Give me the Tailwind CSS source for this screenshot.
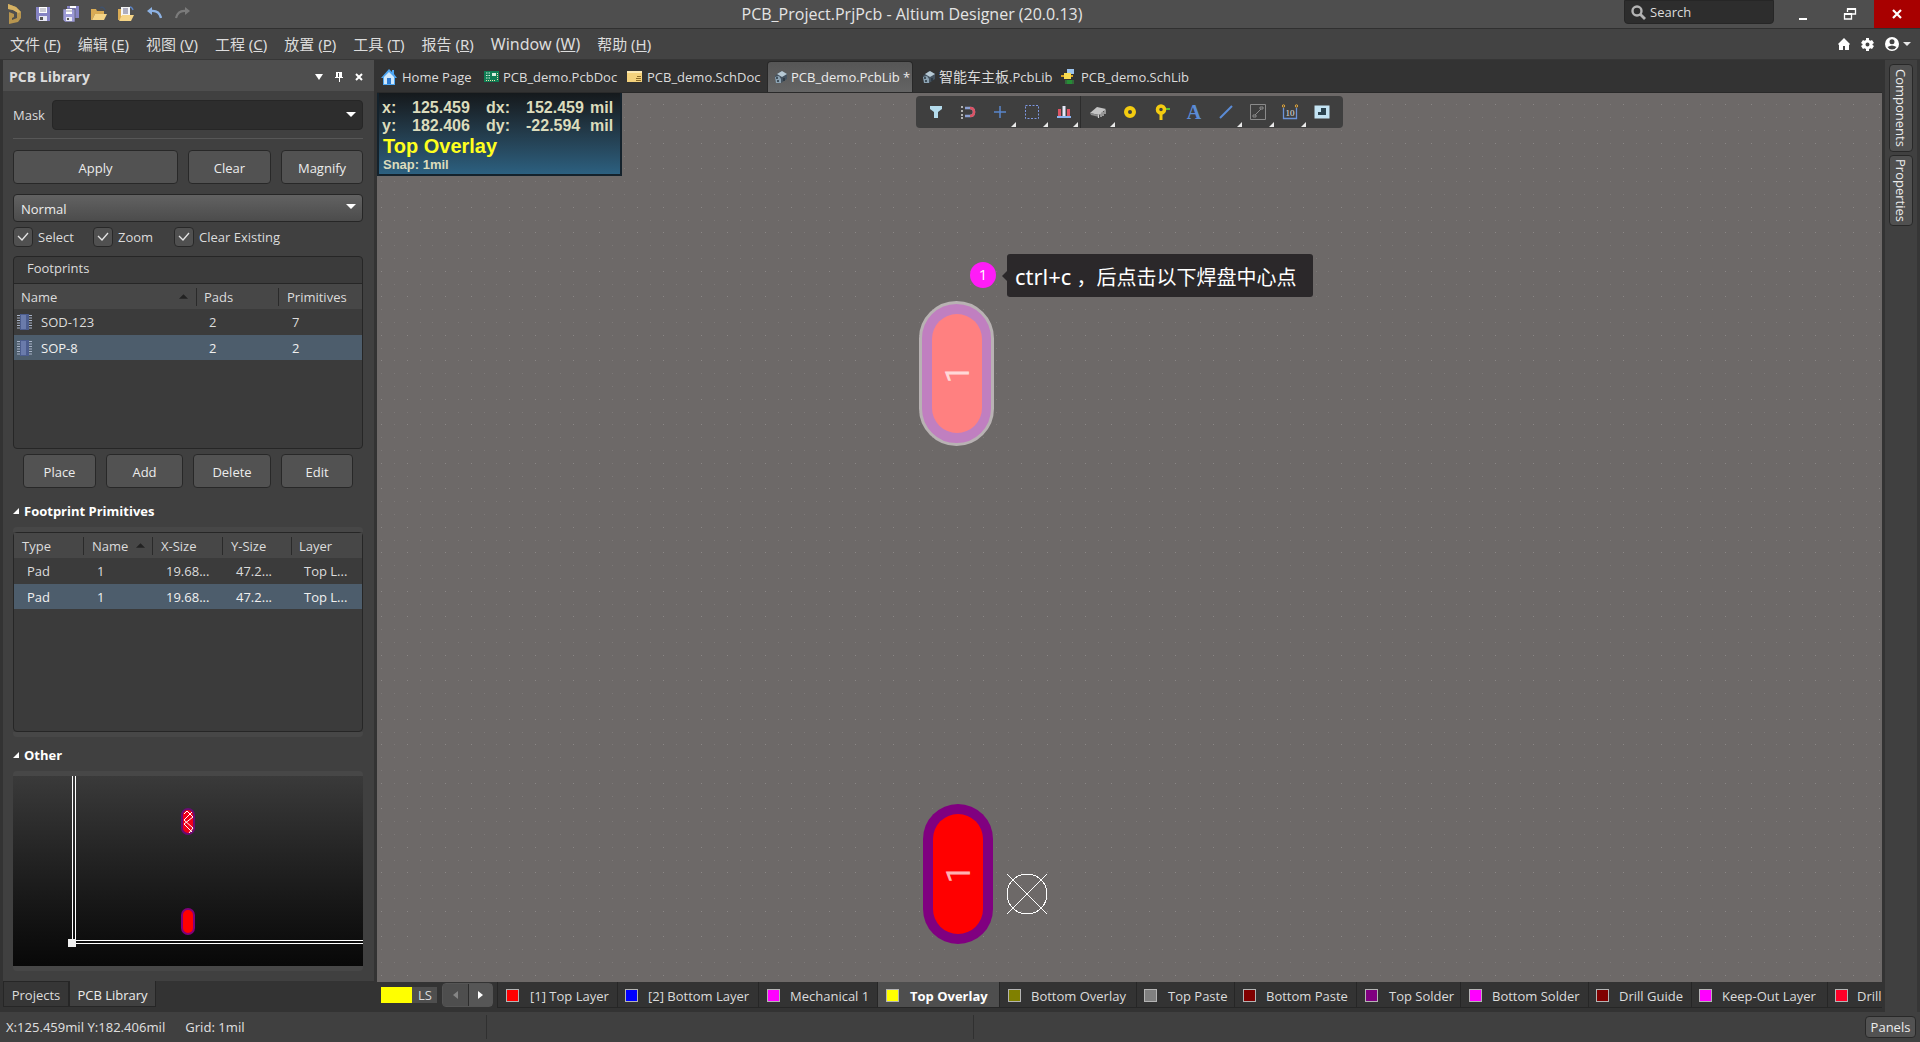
<!DOCTYPE html>
<html lang="zh-CN">
<head>
<meta charset="utf-8">
<meta name="viewport" content="width=device-width, initial-scale=1">
<title>PCB_Project.PrjPcb - Altium Designer (20.0.13)</title>
<script src="https://cdn.jsdelivr.net/npm/@tailwindcss/browser@4"></script>
</head>
<body class="flex h-screen flex-col overflow-hidden bg-[#404040] font-['Open_Sans','Noto_Sans_CJK_SC',sans-serif] text-[13px] leading-[18px] text-[#dcdcdc]">

<!-- Title bar -->
<header class="relative flex h-[29px] shrink-0 items-center justify-between border-b border-[#303030] bg-[#4e4e4e]">
  <div class="flex items-center gap-3 pl-[6px]">
    <svg class="h-[22px] w-4" viewBox="0 0 16 22"><path d="M2 1l8 3 5 5v6l-3 4-9 2V9l5 2v3l-2 1v2l5-2V9L7 7 2 6z" fill="#b7954f"/><path d="M2 1l8 3 5 5-3 1-5-3-5-1z" fill="#d6b264"/></svg>
    <button class="ml-px" aria-label="Save"><svg class="h-4 w-4" viewBox="0 0 16 16"><path d="M1 1h14v14H3l-2-2z" fill="#8583c4"/><path d="M4 1h8v6H4z" fill="#fff"/><path d="M5 3h6M5 5h6" stroke="#99a"/><path d="M4 10h8v5H4z" fill="#e8e8f4"/><path d="M5 11h3v3H5z" fill="#555"/></svg></button>
    <button aria-label="Save all"><svg class="h-4 w-4" viewBox="0 0 16 16"><path d="M4 0h12v12H4z" fill="#8583c4"/><path d="M7 0h6v2H7z" fill="#fff"/><path d="M0 3h12v13H2l-2-2z" fill="#9b99d6" stroke="#4e4e4e" stroke-width=".6"/><path d="M3 3h6v5H3z" fill="#fff"/><path d="M3 5h6" stroke="#99a"/><path d="M3 11h6v4H3z" fill="#e8e8f4"/><path d="M4 12h2v2H4z" fill="#555"/></svg></button>
    <button aria-label="Open"><svg class="h-4 w-4" viewBox="0 0 16 16"><path d="M0 3h5l1 2h7v3H4L1 14H0z" fill="#d9ab55"/><path d="M4 8h12l-3 6H1z" fill="#f5d486"/><path d="M9 2q3-2 5 2" fill="none" stroke="#41526b" stroke-width="1.5"/></svg></button>
    <button class="-ml-px" aria-label="Open project"><svg class="h-4 w-4" viewBox="0 0 16 16"><path d="M0 3h4v11H0z" fill="#d9ab55"/><path d="M3 1h9v9H3z" fill="#f4f4f4"/><path d="M5 3h5M5 5h5M5 7h5" stroke="#668"/><path d="M4 9h12l-3 6H1z" fill="#f5d486"/><path d="M12 1q2 0 3 3" fill="none" stroke="#5b83c4" stroke-width="1.5"/></svg></button>
    <button aria-label="Undo"><svg class="h-4 w-4" viewBox="0 0 16 16"><path d="M6 1v8L1 5z" fill="#8db2e3"/><path d="M5 5q8-1 10 7" fill="none" stroke="#8db2e3" stroke-width="2.4"/></svg></button>
    <button aria-label="Redo"><svg class="h-4 w-4" viewBox="0 0 16 16"><path d="M11 1v8l5-4z" fill="#7b7b7b"/><path d="M12 5q-8-1-10 7" fill="none" stroke="#7b7b7b" stroke-width="2.2"/></svg></button>
  </div>
  <h1 class="absolute left-[47.5%] -translate-x-1/2 text-[16px] leading-5 whitespace-nowrap text-[#e4e4e4]">PCB_Project.PrjPcb - Altium Designer (20.0.13)</h1>
  <div class="flex h-full items-start">
    <label class="mr-4 flex h-6 w-[150px] items-center gap-1 rounded-b-sm border border-[#262626] bg-[#2d2d2d] pl-[6px]">
      <svg class="h-[15px] w-[15px] shrink-0" viewBox="0 0 15 15"><circle cx="6" cy="6" r="4.5" fill="none" stroke="#b4b4b4" stroke-width="2.4"/><path d="M9 9l5 5" stroke="#b4b4b4" stroke-width="2.8"/></svg>
      <input type="text" placeholder="Search" aria-label="Search" class="w-24 bg-transparent outline-none placeholder:text-[#dcdcdc]">
    </label>
    <button class="grid h-7 w-[26px] place-items-center" aria-label="Minimize"><svg class="h-4 w-4" viewBox="0 0 16 16"><path d="M4 12h8v2H4z" fill="#fff"/></svg></button>
    <button class="ml-[10px] grid h-7 w-12 place-items-center" aria-label="Restore"><svg class="h-4 w-4" viewBox="0 0 16 16" fill="none" stroke="#fff" stroke-width="1.3"><path d="M2.500 8h7v5h-7zM5.500 6V3h8v5h-4"/><path d="M5 3h9M2 8h8" stroke-width="2"/></svg></button>
    <button class="grid h-7 w-[46px] place-items-center bg-[#a80000]" aria-label="Close"><svg class="h-[10px] w-[10px]" viewBox="0 0 10 10"><path d="M1 1l8 8M9 1L1 9" stroke="#fff" stroke-width="2.200"/></svg></button>
  </div>
</header>

<!-- Menu bar -->
<nav class="flex h-[31px] shrink-0 items-center justify-between border-b border-[#363636] bg-[#434343] pl-[10px]">
  <div class="flex gap-[17px] font-['Noto_Sans','Noto_Sans_CJK_SC',sans-serif] text-[15px] leading-5">
    <a href="#">文件 (<u>F</u>)</a><a href="#">编辑 (<u>E</u>)</a><a href="#">视图 (<u>V</u>)</a><a href="#">工程 (<u>C</u>)</a><a href="#">放置 (<u>P</u>)</a><a href="#">工具 (<u>T</u>)</a><a href="#">报告 (<u>R</u>)</a><a href="#" class="text-[16px]">Window (<u>W</u>)</a><a href="#">帮助 (<u>H</u>)</a>
  </div>
  <div class="flex items-center gap-[11px] pr-[9px]">
    <button aria-label="Home"><svg class="h-3 w-3" viewBox="0 0 12 12"><path d="M6 0l6 6-1 1v5H7V8H5v4H1V7L0 6z" fill="#fff"/></svg></button>
    <button aria-label="Settings"><svg class="h-[13px] w-[13px]" viewBox="0 0 13 13"><path fill-rule="evenodd" d="M5 0h3v2l1.500.8L11 2l2 3-1.500 1v1L13 8l-2 3-1.500-.8L8 11v2H5v-2l-1.500-.8L2 11 0 8l1.500-1V6L0 5l2-3 1.500.8L5 2zM6.500 4.500a2 2 0 100 4 2 2 0 000-4z" fill="#fff"/></svg></button>
    <button class="flex items-center gap-1" aria-label="Account"><svg class="h-[14px] w-[14px]" viewBox="0 0 14 14"><path fill-rule="evenodd" d="M7 0a7 7 0 100 14A7 7 0 007 0zM7 2.300a2.500 2.500 0 110 5 2.500 2.500 0 010-5zM2.500 10Q7 7 11.500 10 10 12.500 7 12.500T2.500 10z" fill="#fff"/></svg><svg class="h-2 w-2" viewBox="0 0 8 8"><path d="M0 2h8L4 6z" fill="#e8e8e8"/></svg></button>
  </div>
</nav>

<main class="flex min-h-0 flex-1 bg-[#333]">
  <!-- PCB Library panel -->
  <aside class="flex w-[374px] shrink-0 flex-col pl-[3px]">
    <section class="flex min-h-0 flex-1 flex-col bg-[#404040]">
      <div class="flex h-[31px] shrink-0 items-center justify-between bg-[#4e4e4e] pt-[2px] pr-[11px] pl-[6px]">
        <h2 class="text-[14px] font-bold">PCB Library</h2>
        <div class="flex items-center gap-3">
          <button aria-label="Panel menu"><svg class="h-2 w-2" viewBox="0 0 8 8"><path d="M0 1h8L4 7z" fill="#fff"/></svg></button>
          <button aria-label="Pin"><svg class="h-[10px] w-2" viewBox="0 0 8 10"><path d="M1 0h6v5h1v1H5v4H4V6H0V5h1zM3 1v4h1V1z" fill="#fff" fill-rule="evenodd"/></svg></button>
          <button aria-label="Close panel"><svg class="h-2 w-2" viewBox="0 0 8 8"><path d="M1 1l6 6M7 1L1 7" stroke="#fff" stroke-width="2"/></svg></button>
        </div>
      </div>
      <div class="flex min-h-0 flex-1 flex-col pt-[9px] pr-[11px] pb-[10px] pl-[10px]">
        <div class="flex h-[30px] shrink-0 items-center">
          <label for="mask" class="w-[39px]">Mask</label>
          <div class="relative flex-1">
            <input id="mask" type="text" class="block h-[30px] w-full rounded-sm border border-[#262626] bg-[#2d2d2d] px-2 outline-none">
            <svg class="pointer-events-none absolute top-3 right-[7px] h-[6px] w-[10px]" viewBox="0 0 10 6"><path d="M0 0h10L5 5z" fill="#fff"/></svg>
          </div>
        </div>
        <hr class="mt-2 shrink-0 border-[#575757]">
        <div class="mt-[11px] flex shrink-0 gap-[10px] text-[#ececec]">
          <button class="h-[34px] flex-1 rounded border border-[#282828] bg-[#525252] pt-px">Apply</button>
          <button class="h-[34px] w-[83px] rounded border border-[#282828] bg-[#525252] pt-px">Clear</button>
          <button class="h-[34px] w-[82px] rounded border border-[#282828] bg-[#525252] pt-px">Magnify</button>
        </div>
        <div class="relative mt-[10px] shrink-0">
          <select aria-label="Selection mode" class="block h-7 w-full appearance-none rounded-sm border border-[#262626] bg-linear-to-b from-[#626262] to-[#4c4c4c] pt-px pl-[7px] text-[#ececec]"><option>Normal</option></select>
          <svg class="pointer-events-none absolute top-[10px] right-[7px] h-[6px] w-[10px]" viewBox="0 0 10 6"><path d="M0 0h10L5 5z" fill="#fff"/></svg>
        </div>
        <div class="mt-[5px] flex h-5 shrink-0">
          <label class="flex w-20 items-center gap-[5px]"><span class="relative h-5 w-5"><input type="checkbox" checked class="block h-5 w-5 appearance-none rounded border border-[#282828] bg-[#505050]"><svg class="pointer-events-none absolute top-[5px] left-1 h-[10px] w-3" viewBox="0 0 12 10"><path d="M1 4l4 4 6-7" fill="none" stroke="#e4e4e4" stroke-width="1.300"/></svg></span>Select</label>
          <label class="flex w-[81px] items-center gap-[5px]"><span class="relative h-5 w-5"><input type="checkbox" checked class="block h-5 w-5 appearance-none rounded border border-[#282828] bg-[#505050]"><svg class="pointer-events-none absolute top-[5px] left-1 h-[10px] w-3" viewBox="0 0 12 10"><path d="M1 4l4 4 6-7" fill="none" stroke="#e4e4e4" stroke-width="1.300"/></svg></span>Zoom</label>
          <label class="flex items-center gap-[5px]"><span class="relative h-5 w-5"><input type="checkbox" checked class="block h-5 w-5 appearance-none rounded border border-[#282828] bg-[#505050]"><svg class="pointer-events-none absolute top-[5px] left-1 h-[10px] w-3" viewBox="0 0 12 10"><path d="M1 4l4 4 6-7" fill="none" stroke="#e4e4e4" stroke-width="1.300"/></svg></span>Clear Existing</label>
        </div>

        <div class="mt-[9px] h-[193px] shrink-0 rounded-sm border border-[#262626] bg-[#3b3b3b]">
          <h3 class="h-[27px] border-b border-[#262626] pt-[2px] pl-[13px]">Footprints</h3>
          <table class="w-full table-fixed text-left">
            <colgroup><col class="w-[183px]"><col class="w-[82px]"><col></colgroup>
            <thead><tr class="h-[25px] bg-[#474747]">
              <th class="font-normal"><span class="flex items-center justify-between border-r border-[#2a2a2a] pr-2 pl-[7px]">Name<svg class="h-[5px] w-[9px]" viewBox="0 0 10 5"><path d="M0 5h10L5 0z" fill="#222"/></svg></span></th>
              <th class="font-normal"><span class="block border-r border-[#2a2a2a] pl-[7px]">Pads</span></th>
              <th class="pl-2 font-normal">Primitives</th></tr></thead>
            <tbody>
              <tr class="h-[26px]"><td class="pl-[3px]"><span class="flex items-center gap-[9px]"><svg class="h-4 w-[15px]" viewBox="0 0 15 16"><path d="M1.500 1v15M13.500 1v15" stroke="#a9b4c8" stroke-width="3" stroke-dasharray="1 1.500"/><path d="M3 0h9v16H3z" fill="#4c5d8e"/><path d="M4 1h5v14H4z" fill="#6a7bab"/></svg>SOD-123</span></td><td class="pl-3">2</td><td class="pl-[13px]">7</td></tr>
              <tr class="h-[25px] bg-[#4d5d6c] text-[#f0f0f0]"><td class="pl-[3px]"><span class="flex items-center gap-[9px]"><svg class="h-4 w-[15px]" viewBox="0 0 15 16"><path d="M1.500 1v15M13.500 1v15" stroke="#a9b4c8" stroke-width="3" stroke-dasharray="1 1.500"/><path d="M3 0h9v16H3z" fill="#4c5d8e"/><path d="M4 1h5v14H4z" fill="#6a7bab"/></svg>SOP-8</span></td><td class="pl-3">2</td><td class="pl-[13px]">2</td></tr>
            </tbody>
          </table>
        </div>

        <div class="mt-[5px] flex shrink-0 gap-[10px] px-[10px] text-[#ececec]">
          <button class="h-[34px] w-[73px] rounded border border-[#282828] bg-[#525252] pt-px">Place</button>
          <button class="h-[34px] w-[77px] rounded border border-[#282828] bg-[#525252] pt-px">Add</button>
          <button class="h-[34px] w-[78px] rounded border border-[#282828] bg-[#525252] pt-px">Delete</button>
          <button class="h-[34px] w-[72px] rounded border border-[#282828] bg-[#525252] pt-px">Edit</button>
        </div>

        <h3 class="mt-[14px] flex shrink-0 items-center gap-[5px] font-bold text-white"><svg class="h-[6px] w-[6px]" viewBox="0 0 6 6"><path d="M6 0v6H0z" fill="#fff"/></svg>Footprint Primitives</h3>
        <div class="mt-[7px] h-[210px] shrink-0 rounded border-y-[5px] border-[#474747]">
          <div class="h-full rounded-sm border border-[#262626] bg-[#3b3b3b]">
          <table class="w-full table-fixed text-left">
            <colgroup><col class="w-[70px]"><col class="w-[69px]"><col class="w-[70px]"><col class="w-[69px]"><col></colgroup>
            <thead><tr class="h-[25px] bg-[#474747]">
              <th class="font-normal"><span class="block border-r border-[#2a2a2a] pl-2">Type</span></th>
              <th class="font-normal"><span class="flex items-center justify-between border-r border-[#2a2a2a] pr-[7px] pl-2">Name<svg class="h-[5px] w-[9px]" viewBox="0 0 10 5"><path d="M0 5h10L5 0z" fill="#222"/></svg></span></th>
              <th class="font-normal"><span class="block border-r border-[#2a2a2a] pl-2">X-Size</span></th>
              <th class="font-normal"><span class="block border-r border-[#2a2a2a] pl-2">Y-Size</span></th>
              <th class="pl-[7px] font-normal">Layer</th></tr></thead>
            <tbody>
              <tr class="h-[26px]"><td class="pl-[13px]">Pad</td><td class="pl-[13px]">1</td><td class="pl-[13px]">19.68...</td><td class="pl-[13px]">47.2...</td><td class="pl-3 whitespace-nowrap">Top L...</td></tr>
              <tr class="h-[25px] bg-[#4d5d6c] text-[#f0f0f0]"><td class="pl-[13px]">Pad</td><td class="pl-[13px]">1</td><td class="pl-[13px]">19.68...</td><td class="pl-[13px]">47.2...</td><td class="pl-3 whitespace-nowrap">Top L...</td></tr>
            </tbody>
          </table>
          </div>
        </div>

        <h3 class="mt-[9px] flex shrink-0 items-center gap-[5px] font-bold text-white"><svg class="h-[6px] w-[6px]" viewBox="0 0 6 6"><path d="M6 0v6H0z" fill="#fff"/></svg>Other</h3>
        <div class="mt-[7px] min-h-0 flex-1 rounded border-y-[5px] border-[#474747]">
          <svg class="block h-full w-full bg-linear-to-b from-[#3a3a3a] to-[#080808]" viewBox="0 0 350 190" preserveAspectRatio="xMinYMin slice">
            <g fill="#fff"><path d="M59 0h1v165h-1zM62 0h1v164h-1zM63 164h287v1H63zM63 167h287v1H63z"/><path d="M55 163h8v8h-8z" fill="#f0f0f0"/></g>
            <rect x="169" y="33" width="12" height="25" rx="6" fill="#f00018" stroke="#6a0a72" stroke-width="2"/>
            <path d="M171 38l3-3 6 6-9 7 8 8M179 36l-8 8 9 8-4 5" fill="none" stroke="#fff"/>
            <rect x="169" y="133" width="12" height="25" rx="6" fill="#f00" stroke="#80007a" stroke-width="2"/>
          </svg>
        </div>
      </div>
    </section>
    <div class="flex h-[31px] shrink-0">
      <button class="h-[26px] w-[66px] border border-[#262626] bg-[#363636] pt-px">Projects</button>
      <button class="h-[26px] w-[87px] border border-t-0 border-[#262626] bg-[#404040] pt-[2px] text-[#ececec]">PCB Library</button>
    </div>
  </aside>

  <!-- Editor -->
  <section class="ml-[3px] flex min-w-0 flex-1 flex-col">
    <div class="flex h-[33px] shrink-0 items-center border-b border-[#2a2a2a] pt-px">
      <a href="#" class="flex w-[101px] items-center gap-[5px] pl-1 whitespace-nowrap">
        <svg class="h-4 w-4 shrink-0" viewBox="0 0 16 16"><path d="M8 0l3 3V1h2v4l3 4h-2v7H2V9H0z" fill="#4ea6f2"/><path d="M8 3l5 5v7H3V8z" fill="#cfe8fb"/><path d="M6 9h4v6H6z" fill="#2c7ad2"/></svg>Home Page</a>
      <a href="#" class="flex w-[145px] items-center gap-1 pl-[5px] whitespace-nowrap">
        <svg class="h-4 w-4 shrink-0" viewBox="0 0 16 16"><path d="M1 2h15v11H1z" fill="#0f7d55"/><path d="M9 4h4v3H9z" fill="#d8efe0"/><path d="M3 4h4M3 6.500h4M3 9h4" stroke="#d8efe0" stroke-dasharray="1.500 1"/><path d="M3 11.500h9M14.500 4v7" stroke="#e8e0a8" stroke-dasharray="1 1"/></svg>PCB_demo.PcbDoc</a>
      <a href="#" class="flex w-[144px] items-center gap-1 pl-1 whitespace-nowrap">
        <svg class="h-4 w-4 shrink-0" viewBox="0 0 16 16"><path d="M0 2h15v11H0z" fill="#f4d27c"/><path d="M0 2h15v2H0z" fill="#fbe9b4"/><path d="M9 9.500h5M9 11.500h5M10 7.500h4" stroke="#8a6a28"/></svg>PCB_demo.SchDoc</a>
      <a href="#" class="flex h-full w-[146px] items-center gap-[2px] rounded-t-sm border border-b-0 border-[#282828] bg-linear-to-b from-[#565656] to-[#646464] pl-[5px] whitespace-nowrap text-[#ececec]">
        <svg class="h-4 w-4 shrink-0" viewBox="0 0 16 16"><path d="M2 7l6-5 6 3v5l-6 4-5-1z" fill="#44525f"/><path d="M4 5l5-3 5 3-5 3z" fill="#b7c9d4"/><path d="M2 8l4-1 2 3v4H3z" fill="#8ba2b2"/><path d="M4 8v2M4 12h2M11 9v3" stroke="#28343e" stroke-width="1.500"/></svg>PCB_demo.PcbLib *</a>
      <a href="#" class="flex w-[144px] items-center gap-[2px] pl-2 whitespace-nowrap">
        <svg class="h-4 w-4 shrink-0" viewBox="0 0 16 16"><path d="M2 7l6-5 6 3v5l-6 4-5-1z" fill="#44525f"/><path d="M4 5l5-3 5 3-5 3z" fill="#b7c9d4"/><path d="M2 8l4-1 2 3v4H3z" fill="#8ba2b2"/><path d="M4 8v2M4 12h2M11 9v3" stroke="#28343e" stroke-width="1.500"/></svg><span><span class="text-[14px]">智能车主板</span>.PcbLib</span></a>
      <a href="#" class="flex items-center gap-1 pl-1 whitespace-nowrap">
        <svg class="h-4 w-4 shrink-0" viewBox="0 0 16 16"><path d="M6 0h7v5H6z" fill="#9cc4ee"/><path d="M0 6h12v2H0z" fill="#d9a020"/><path d="M3 4h7v6H3z" fill="#f8dc50"/><path d="M6 11h5v4H6z" fill="#187a28"/><path d="M4 12h9M4 14h9" stroke="#35a044"/></svg>PCB_demo.SchLib</a>
    </div>

    <!-- Drawing canvas -->
    <div class="relative min-h-0 flex-1 overflow-hidden bg-[#6d6968]">
      <svg class="absolute inset-0 h-full w-full">
        <defs><pattern id="dots" x="30" y="50" width="64" height="64" patternUnits="userSpaceOnUse">
          <path d="M0 .5h1M13 .5h1M25 .5h1M38 .5h1M51 .5h1M0 13.500h1M13 13.500h1M25 13.500h1M38 13.500h1M51 13.500h1M0 25.500h1M13 25.500h1M25 25.500h1M38 25.500h1M51 25.500h1M0 38.500h1M13 38.500h1M25 38.500h1M38 38.500h1M51 38.500h1M0 51.500h1M13 51.500h1M25 51.500h1M38 51.500h1M51 51.500h1" stroke="#7d7978"/><path d="M0 .5h1M0 25.500h1M38 .5h1M38 25.500h1" stroke="#8a8685"/></pattern></defs>
        <rect width="100%" height="100%" fill="url(#dots)"/>
      </svg>

      <div class="absolute top-0 left-0 h-[83px] w-[245px] border-2 border-t-0 border-[#14222c] bg-linear-to-b from-[#15191c] via-[#233c4c] to-[#2c6080] pt-[6px] pl-[3px] font-['Liberation_Sans',sans-serif] font-bold text-[#dcdcbc]">
        <dl class="grid grid-cols-[30px_74px_40px_64px_auto] justify-start text-[16px] leading-[18px]">
          <dt>x:</dt><dd>125.459</dd><dt>dx:</dt><dd>152.459</dd><dd>mil</dd>
          <dt>y:</dt><dd>182.406</dd><dt>dy:</dt><dd>-22.594</dd><dd>mil</dd>
        </dl>
        <p class="pl-px text-[20px] leading-[22px] text-[#ffff1e]">Top Overlay</p>
        <p class="pl-px text-[13px] leading-4">Snap: 1mil</p>
      </div>

      <!-- Active bar -->
      <div class="absolute top-[3px] left-[539px] flex h-8 items-center rounded bg-[#3f3f3f] pr-[5px] pl-1">
        <button class="grid h-8 w-8 place-items-center" aria-label="Filter"><svg class="h-4 w-4" viewBox="0 0 16 16"><path d="M2 2h12v3l-4 3v6H6V8L2 5z" fill="#b4dbec"/></svg></button>
        <button class="grid h-8 w-8 place-items-center" aria-label="Snap"><svg class="h-4 w-4" viewBox="0 0 16 16"><path d="M5 4h5q4 0 4 4t-4 4H5" fill="none" stroke="#8c9fd0" stroke-width="2.500"/><path d="M10 4q4 0 4 4t-4 4" fill="none" stroke="#dc5464" stroke-width="2.500"/><path d="M1 3h2M1 7h2M1 11h2M1 14h2" stroke="#d8d8d8" stroke-width="1.500"/></svg></button>
        <button class="relative grid h-8 w-8 place-items-center" aria-label="Move"><svg class="h-4 w-4" viewBox="0 0 16 16"><path d="M8 2v12M2 8h12" stroke="#5a86cc" stroke-width="1.500"/></svg><svg class="absolute right-0 bottom-px h-[5px] w-[5px]" viewBox="0 0 5 5"><path d="M5 0v5H0z" fill="#e8e8e8"/></svg></button>
        <button class="relative grid h-8 w-8 place-items-center" aria-label="Select"><svg class="h-4 w-4" viewBox="0 0 16 16"><path d="M1.500 1.500h13v13h-13z" fill="none" stroke="#7d97e0" stroke-dasharray="2 1.500"/></svg><svg class="absolute right-0 bottom-px h-[5px] w-[5px]" viewBox="0 0 5 5"><path d="M5 0v5H0z" fill="#e8e8e8"/></svg></button>
        <button class="relative grid h-8 w-[33px] place-items-center border-r border-[#2c2c2c]" aria-label="Align"><svg class="h-4 w-4" viewBox="0 0 16 16"><path d="M2 5h3v7H2zM11 5h3v7h-3z" fill="#dc5464"/><path d="M6.500 2h3v10h-3z" fill="#e8e8f8"/><path d="M1 12h14v2H1z" fill="#8cb4f0"/></svg><svg class="absolute right-[2px] bottom-px h-[5px] w-[5px]" viewBox="0 0 5 5"><path d="M5 0v5H0z" fill="#e8e8e8"/></svg></button>
        <button class="relative ml-px grid h-8 w-8 place-items-center" aria-label="Component body"><svg class="h-4 w-4" viewBox="0 0 16 16"><path d="M0 9l7-6 9 2-7 6z" fill="#c4c4c4"/><path d="M0 9l9 2v2l-8-2z" fill="#8e8e8e"/><path d="M8.500 11v3M11 9v4M13 8v4M15 6v4" stroke="#d0d0d0" stroke-width="1.200"/></svg><svg class="absolute -right-px bottom-px h-[5px] w-[5px]" viewBox="0 0 5 5"><path d="M5 0v5H0z" fill="#e8e8e8"/></svg></button>
        <button class="grid h-8 w-8 place-items-center" aria-label="Pad"><svg class="h-4 w-4" viewBox="0 0 16 16"><circle cx="8" cy="8" r="4" fill="#3f3f3f" stroke="#f4cc10" stroke-width="4"/></svg></button>
        <button class="grid h-8 w-8 place-items-center" aria-label="Via"><svg class="h-4 w-4" viewBox="0 0 16 16"><path d="M9 5h7" stroke="#58c030" stroke-width="2"/><path d="M7 8v8" stroke="#f4cc10" stroke-width="3"/><circle cx="7" cy="5.500" r="3.500" fill="#3f3f3f" stroke="#f4cc10" stroke-width="3.500"/></svg></button>
        <button class="grid h-8 w-8 place-items-center font-['Liberation_Serif',serif] text-[20px] font-bold text-[#5b8cd6]" aria-label="String">A</button>
        <button class="relative grid h-8 w-8 place-items-center" aria-label="Line"><svg class="h-4 w-4" viewBox="0 0 16 16"><path d="M2 14L14 2" stroke="#5b8cd6" stroke-width="2"/></svg><svg class="absolute right-0 bottom-px h-[5px] w-[5px]" viewBox="0 0 5 5"><path d="M5 0v5H0z" fill="#e8e8e8"/></svg></button>
        <button class="relative grid h-8 w-8 place-items-center" aria-label="Region"><svg class="h-4 w-4" viewBox="0 0 16 16"><path d="M.5.5h15v15H.5z" fill="none" stroke="#8a8a8a"/><path d="M5 11l6-6M3 11h3v2H3zM10 3h3v2h-3z" fill="none" stroke="#8a8a8a"/></svg><svg class="absolute right-0 bottom-px h-[5px] w-[5px]" viewBox="0 0 5 5"><path d="M5 0v5H0z" fill="#e8e8e8"/></svg></button>
        <button class="relative grid h-8 w-8 place-items-center" aria-label="Dimension"><svg class="h-4 w-4" viewBox="0 0 16 16"><path d="M1.500 4v10.500h13V4" fill="none" stroke="#6c93d8" stroke-width="1.300"/><circle cx="1.500" cy="2" r="1.200" fill="none" stroke="#e4a83c"/><circle cx="14.500" cy="2" r="1.200" fill="none" stroke="#e4a83c"/><text x="8" y="12" text-anchor="middle" font-family="Liberation Serif" font-size="9" fill="#e0e0e0">10</text></svg><svg class="absolute right-0 bottom-px h-[5px] w-[5px]" viewBox="0 0 5 5"><path d="M5 0v5H0z" fill="#e8e8e8"/></svg></button>
        <button class="grid h-8 w-8 place-items-center" aria-label="Polygon cutout"><svg class="h-4 w-4" viewBox="0 0 16 16"><path d="M.5 1.500h15v13H.5z" fill="#c4e4f4"/><path d="M7 4h5v7H4V8h3z" fill="#2c4450"/></svg></button>
      </div>

      <!-- Pads -->
      <div class="absolute top-[208px] left-[542px] grid h-[145px] w-[75px] place-items-center rounded-full border-[3px] border-[#b8b2b3] bg-[#c07fc0]">
        <div class="grid h-[119px] w-[50px] place-items-center rounded-full bg-[#ff8080]"><span class="-rotate-90 font-['Roboto',sans-serif] text-[34px] leading-none text-[#ffd8d8]">1</span></div>
      </div>
      <div class="absolute top-[711px] left-[546px] grid h-[140px] w-[70px] place-items-center rounded-full bg-[#800080]">
        <div class="grid h-[120px] w-[50px] place-items-center rounded-full bg-[#f00]"><span class="-rotate-90 font-['Roboto',sans-serif] text-[34px] leading-none text-[#ffb0b0]">1</span></div>
      </div>
      <svg class="absolute top-[780px] left-[629px] h-[42px] w-[42px]" viewBox="0 0 42 42" shape-rendering="crispEdges"><path d="M1 1l40 40M41 1L1 41" stroke="#fff"/><circle cx="21" cy="21" r="20" fill="none" stroke="#fff"/></svg>

      <!-- Step callout -->
      <div class="absolute top-[169px] left-[593px] grid h-[26px] w-[26px] place-items-center rounded-full bg-[#ff1cf7] pb-[2px] text-[15px] leading-none text-white">1</div>
      <div class="absolute top-[161px] left-[625px] flex items-center">
        <svg class="h-[10px] w-[5px]" viewBox="0 0 5 10"><path d="M5 0v10L0 5z" fill="#2b282a"/></svg>
        <p class="h-[43px] w-[306px] rounded-[3px] bg-[#2b282a] pl-2 font-['Noto_Sans','Noto_Sans_CJK_SC',sans-serif] text-[20px] leading-[44px] whitespace-nowrap text-white"><span class="text-[22px]">ctrl+c</span> ，后点击以下焊盘中心点</p>
      </div>
    </div>

    <!-- Layer tabs -->
    <div class="flex h-[30px] shrink-0 items-start overflow-hidden whitespace-nowrap">
      <button class="mt-[5px] ml-1 flex h-4 w-14 shrink-0 items-center bg-[#4e4e4e]"><span class="mr-[6px] h-4 w-[31px] bg-[#ff0]"></span>LS</button>
      <div class="mt-px mr-1 ml-[5px] flex shrink-0 rounded border border-[#555]">
        <button class="grid h-[22px] w-[25px] place-items-center bg-[#4e4e4e]" aria-label="Scroll left"><svg class="h-2 w-[5px]" viewBox="0 0 5 8"><path d="M5 0v8L0 4z" fill="#858585"/></svg></button>
        <button class="grid h-[22px] w-[24px] place-items-center border-l border-[#2c2c2c] bg-[#565656]" aria-label="Scroll right"><svg class="h-2 w-[5px]" viewBox="0 0 5 8"><path d="M0 0v8l5-4z" fill="#fff"/></svg></button>
      </div>
      <button class="flex h-[26px] w-[120px] shrink-0 items-center gap-[11px] border-b border-l border-[#262626] pt-[2px] pl-2"><span class="h-[13px] w-[13px] border border-[#b4b4b4] bg-[#f00]"></span>[1] Top Layer</button>
      <button class="flex h-[26px] w-[141px] shrink-0 items-center gap-[10px] border-b border-l border-[#262626] pt-[2px] pl-[7px]"><span class="h-[13px] w-[13px] border border-[#b4b4b4] bg-[#00f]"></span>[2] Bottom Layer</button>
      <button class="flex h-[26px] w-[119px] shrink-0 items-center gap-[10px] border-b border-l border-[#262626] pt-[2px] pl-2"><span class="h-[13px] w-[13px] border border-[#b4b4b4] bg-[#f0f]"></span>Mechanical 1</button>
      <button class="flex h-[26px] w-[122px] shrink-0 items-center gap-[11px] border-b border-l border-[#262626] bg-[#4e4e4e] pt-[2px] pl-2 font-bold text-white"><span class="h-[13px] w-[13px] border border-[#b4b4b4] bg-[#ff0]"></span>Top Overlay</button>
      <button class="flex h-[26px] w-[137px] shrink-0 items-center gap-[10px] border-b border-l border-[#262626] pt-[2px] pl-2"><span class="h-[13px] w-[13px] border border-[#b4b4b4] bg-[#808000]"></span>Bottom Overlay</button>
      <button class="flex h-[26px] w-[98px] shrink-0 items-center gap-[11px] border-b border-l border-[#262626] pt-[2px] pl-[7px]"><span class="h-[13px] w-[13px] border border-[#b4b4b4] bg-[#808080]"></span>Top Paste</button>
      <button class="flex h-[26px] w-[122px] shrink-0 items-center gap-[10px] border-b border-l border-[#262626] pt-[2px] pl-2"><span class="h-[13px] w-[13px] border border-[#b4b4b4] bg-[#800000]"></span>Bottom Paste</button>
      <button class="flex h-[26px] w-[104px] shrink-0 items-center gap-[11px] border-b border-l border-[#262626] pt-[2px] pl-2"><span class="h-[13px] w-[13px] border border-[#b4b4b4] bg-[#800080]"></span>Top Solder</button>
      <button class="flex h-[26px] w-[128px] shrink-0 items-center gap-[10px] border-b border-l border-[#262626] pt-[2px] pl-2"><span class="h-[13px] w-[13px] border border-[#b4b4b4] bg-[#f0f]"></span>Bottom Solder</button>
      <button class="flex h-[26px] w-[103px] shrink-0 items-center gap-[10px] border-b border-l border-[#262626] pt-[2px] pl-[7px]"><span class="h-[13px] w-[13px] border border-[#b4b4b4] bg-[#800000]"></span>Drill Guide</button>
      <button class="flex h-[26px] w-[136px] shrink-0 items-center gap-[10px] border-b border-l border-[#262626] pt-[2px] pl-[7px]"><span class="h-[13px] w-[13px] border border-[#b4b4b4] bg-[#f0f]"></span>Keep-Out Layer</button>
      <button class="flex h-[26px] min-w-0 flex-1 items-center gap-[9px] border-b border-l border-[#262626] pt-[2px] pl-[7px]"><span class="h-[13px] w-[13px] shrink-0 border border-[#b4b4b4] bg-[#ff0028]"></span>Drill</button>
    </div>
  </section>

  <!-- Side tabs -->
  <aside class="ml-[3px] flex w-[35px] shrink-0 flex-col gap-[3px] border-r-[3px] border-[#363636] bg-[#404040] pt-1 pl-1">
    <button class="h-[88px] w-6 rounded-sm border border-[#282828] bg-[#505050] text-[#ececec] [writing-mode:vertical-rl]">Components</button>
    <button class="h-[71px] w-6 rounded-sm border border-[#282828] bg-[#505050] text-[#ececec] [writing-mode:vertical-rl]">Properties</button>
  </aside>
</main>

<!-- Status bar -->
<footer class="flex h-[30px] shrink-0 items-center bg-[#404040] pr-1 pl-[6px]">
  <div class="grid h-6 flex-1 grid-cols-[481px_487px_1fr] items-center">
    <div class="flex h-full items-center gap-5 border-r border-[#303030] font-['Noto_Sans',sans-serif]"><span>X:125.459mil Y:182.406mil</span><span>Grid: 1mil</span></div>
    <div class="h-full border-r border-[#303030]"></div>
    <button class="h-[22px] w-[51px] justify-self-end rounded-sm border border-[#282828] bg-[#525252] text-[#ececec]">Panels</button>
  </div>
</footer>
</body>
</html>
